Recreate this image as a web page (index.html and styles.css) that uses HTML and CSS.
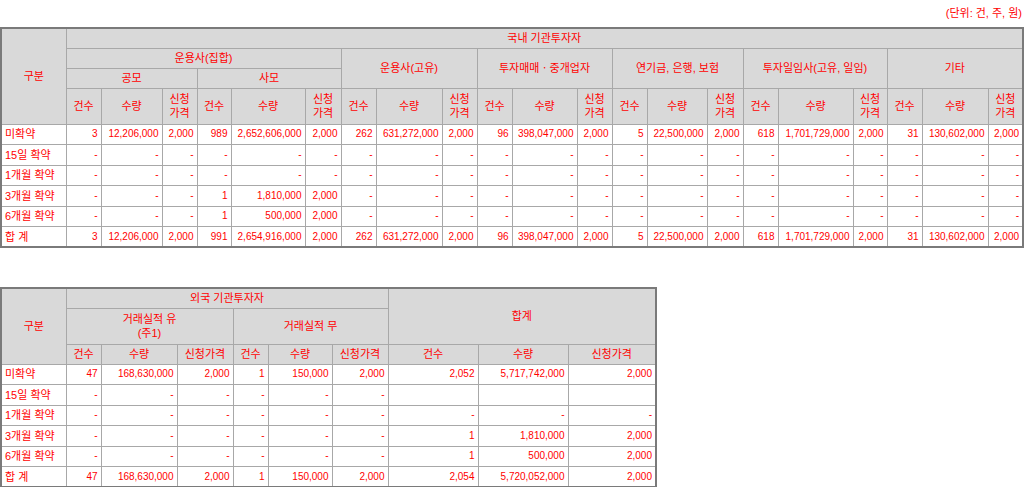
FILE: index.html
```html
<!DOCTYPE html>
<html lang="ko">
<head>
<meta charset="utf-8">
<title>기관투자자 의무보유확약</title>
<link rel="stylesheet" href="styles.css">
</head>
<body>
<div class="unit">(단위: 건, 주, 원)</div>
<table class="grid grid-domestic">
  <colgroup>
    <col style="width:65px"><col style="width:35px"><col style="width:61px"><col style="width:35px"><col style="width:34px"><col style="width:74px"><col style="width:36px"><col style="width:35px"><col style="width:66px"><col style="width:35px"><col style="width:35px"><col style="width:65px"><col style="width:35px"><col style="width:35px"><col style="width:60px"><col style="width:36px"><col style="width:35px"><col style="width:75px"><col style="width:34px"><col style="width:35px"><col style="width:66px"><col style="width:35px">
  </colgroup>
  <thead>
    <tr class="hrow"><th rowspan="4">구분</th><th colspan="21">국내 기관투자자</th></tr>
    <tr class="hrow"><th colspan="6">운용사(집합)</th><th colspan="3" rowspan="2">운용사(고유)</th><th colspan="3" rowspan="2">투자매매ㆍ중개업자</th><th colspan="3" rowspan="2">연기금, 은행, 보험</th><th colspan="3" rowspan="2">투자일임사(고유, 일임)</th><th colspan="3" rowspan="2">기타</th></tr>
    <tr class="hrow"><th colspan="3">공모</th><th colspan="3">사모</th></tr>
    <tr class="hrow2">
      <th>건수</th><th>수량</th><th>신청<br>가격</th>
      <th>건수</th><th>수량</th><th>신청<br>가격</th>
      <th>건수</th><th>수량</th><th>신청<br>가격</th>
      <th>건수</th><th>수량</th><th>신청<br>가격</th>
      <th>건수</th><th>수량</th><th>신청<br>가격</th>
      <th>건수</th><th>수량</th><th>신청<br>가격</th>
      <th>건수</th><th>수량</th><th>신청<br>가격</th>
    </tr>
  </thead>
  <tbody>
    <tr><td class="label">미확약</td><td>3</td><td>12,206,000</td><td>2,000</td><td>989</td><td>2,652,606,000</td><td>2,000</td><td>262</td><td>631,272,000</td><td>2,000</td><td>96</td><td>398,047,000</td><td>2,000</td><td>5</td><td>22,500,000</td><td>2,000</td><td>618</td><td>1,701,729,000</td><td>2,000</td><td>31</td><td>130,602,000</td><td>2,000</td></tr>
    <tr><td class="label">15일 확약</td><td>-</td><td>-</td><td>-</td><td>-</td><td>-</td><td>-</td><td>-</td><td>-</td><td>-</td><td>-</td><td>-</td><td>-</td><td>-</td><td>-</td><td>-</td><td>-</td><td>-</td><td>-</td><td>-</td><td>-</td><td>-</td></tr>
    <tr><td class="label">1개월 확약</td><td>-</td><td>-</td><td>-</td><td>-</td><td>-</td><td>-</td><td>-</td><td>-</td><td>-</td><td>-</td><td>-</td><td>-</td><td>-</td><td>-</td><td>-</td><td>-</td><td>-</td><td>-</td><td>-</td><td>-</td><td>-</td></tr>
    <tr><td class="label">3개월 확약</td><td>-</td><td>-</td><td>-</td><td>1</td><td>1,810,000</td><td>2,000</td><td>-</td><td>-</td><td>-</td><td>-</td><td>-</td><td>-</td><td>-</td><td>-</td><td>-</td><td>-</td><td>-</td><td>-</td><td>-</td><td>-</td><td>-</td></tr>
    <tr><td class="label">6개월 확약</td><td>-</td><td>-</td><td>-</td><td>1</td><td>500,000</td><td>2,000</td><td>-</td><td>-</td><td>-</td><td>-</td><td>-</td><td>-</td><td>-</td><td>-</td><td>-</td><td>-</td><td>-</td><td>-</td><td>-</td><td>-</td><td>-</td></tr>
    <tr><td class="label">합 계</td><td>3</td><td>12,206,000</td><td>2,000</td><td>991</td><td>2,654,916,000</td><td>2,000</td><td>262</td><td>631,272,000</td><td>2,000</td><td>96</td><td>398,047,000</td><td>2,000</td><td>5</td><td>22,500,000</td><td>2,000</td><td>618</td><td>1,701,729,000</td><td>2,000</td><td>31</td><td>130,602,000</td><td>2,000</td></tr>
  </tbody>
</table>

<table class="grid grid-foreign">
  <colgroup>
    <col style="width:65px"><col style="width:35px"><col style="width:76px"><col style="width:56px"><col style="width:35px"><col style="width:64px"><col style="width:56px"><col style="width:90px"><col style="width:90px"><col style="width:88px">
  </colgroup>
  <thead>
    <tr class="hrow"><th rowspan="3">구분</th><th colspan="6">외국 기관투자자</th><th colspan="3" rowspan="2">합계</th></tr>
    <tr class="hrow2"><th colspan="3">거래실적 유<br>(주1)</th><th colspan="3">거래실적 무</th></tr>
    <tr class="hrow"><th>건수</th><th>수량</th><th>신청가격</th><th>건수</th><th>수량</th><th>신청가격</th><th>건수</th><th>수량</th><th>신청가격</th></tr>
  </thead>
  <tbody>
    <tr><td class="label">미확약</td><td>47</td><td>168,630,000</td><td>2,000</td><td>1</td><td>150,000</td><td>2,000</td><td>2,052</td><td>5,717,742,000</td><td>2,000</td></tr>
    <tr><td class="label">15일 확약</td><td>-</td><td>-</td><td>-</td><td>-</td><td>-</td><td>-</td><td></td><td></td><td></td></tr>
    <tr><td class="label">1개월 확약</td><td>-</td><td>-</td><td>-</td><td>-</td><td>-</td><td>-</td><td>-</td><td>-</td><td>-</td></tr>
    <tr><td class="label">3개월 확약</td><td>-</td><td>-</td><td>-</td><td>-</td><td>-</td><td>-</td><td>1</td><td>1,810,000</td><td>2,000</td></tr>
    <tr><td class="label">6개월 확약</td><td>-</td><td>-</td><td>-</td><td>-</td><td>-</td><td>-</td><td>1</td><td>500,000</td><td>2,000</td></tr>
    <tr><td class="label">합 계</td><td>47</td><td>168,630,000</td><td>2,000</td><td>1</td><td>150,000</td><td>2,000</td><td>2,054</td><td>5,720,052,000</td><td>2,000</td></tr>
  </tbody>
</table>
</body>
</html>
```

FILE: styles.css
```css
html, body {
  margin: 0;
  padding: 0;
  background: #ffffff;
}

body {
  font-family: "Liberation Sans", "Noto Sans CJK KR", sans-serif;
  font-size: 11px;
  color: #ff0000;
}

.unit {
  height: 27px;
  line-height: 27px;
  text-align: right;
  padding-right: 2px;
}

.grid {
  border-collapse: collapse;
  table-layout: fixed;
  border: 2px solid #7a7a7a;
}

.grid-domestic {
  width: 1023px;
}

.grid-foreign {
  width: 657px;
  margin-top: 39px;
}

.grid th,
.grid td {
  border: 1px solid #a8a8a8;
  padding: 0 3px;
  line-height: 14px;
  white-space: nowrap;
  overflow: hidden;
}

.grid th {
  background: #d9d9d9;
  font-weight: normal;
  text-align: center;
}

.hrow {
  height: 20px;
}

.hrow2 {
  height: 36px;
}

.grid tbody tr {
  height: 20.5px;
}

.grid td {
  background: #ffffff;
  text-align: right;
  font-size: 10px;
}

.grid td.label {
  text-align: left;
  font-size: 11px;
}
```
